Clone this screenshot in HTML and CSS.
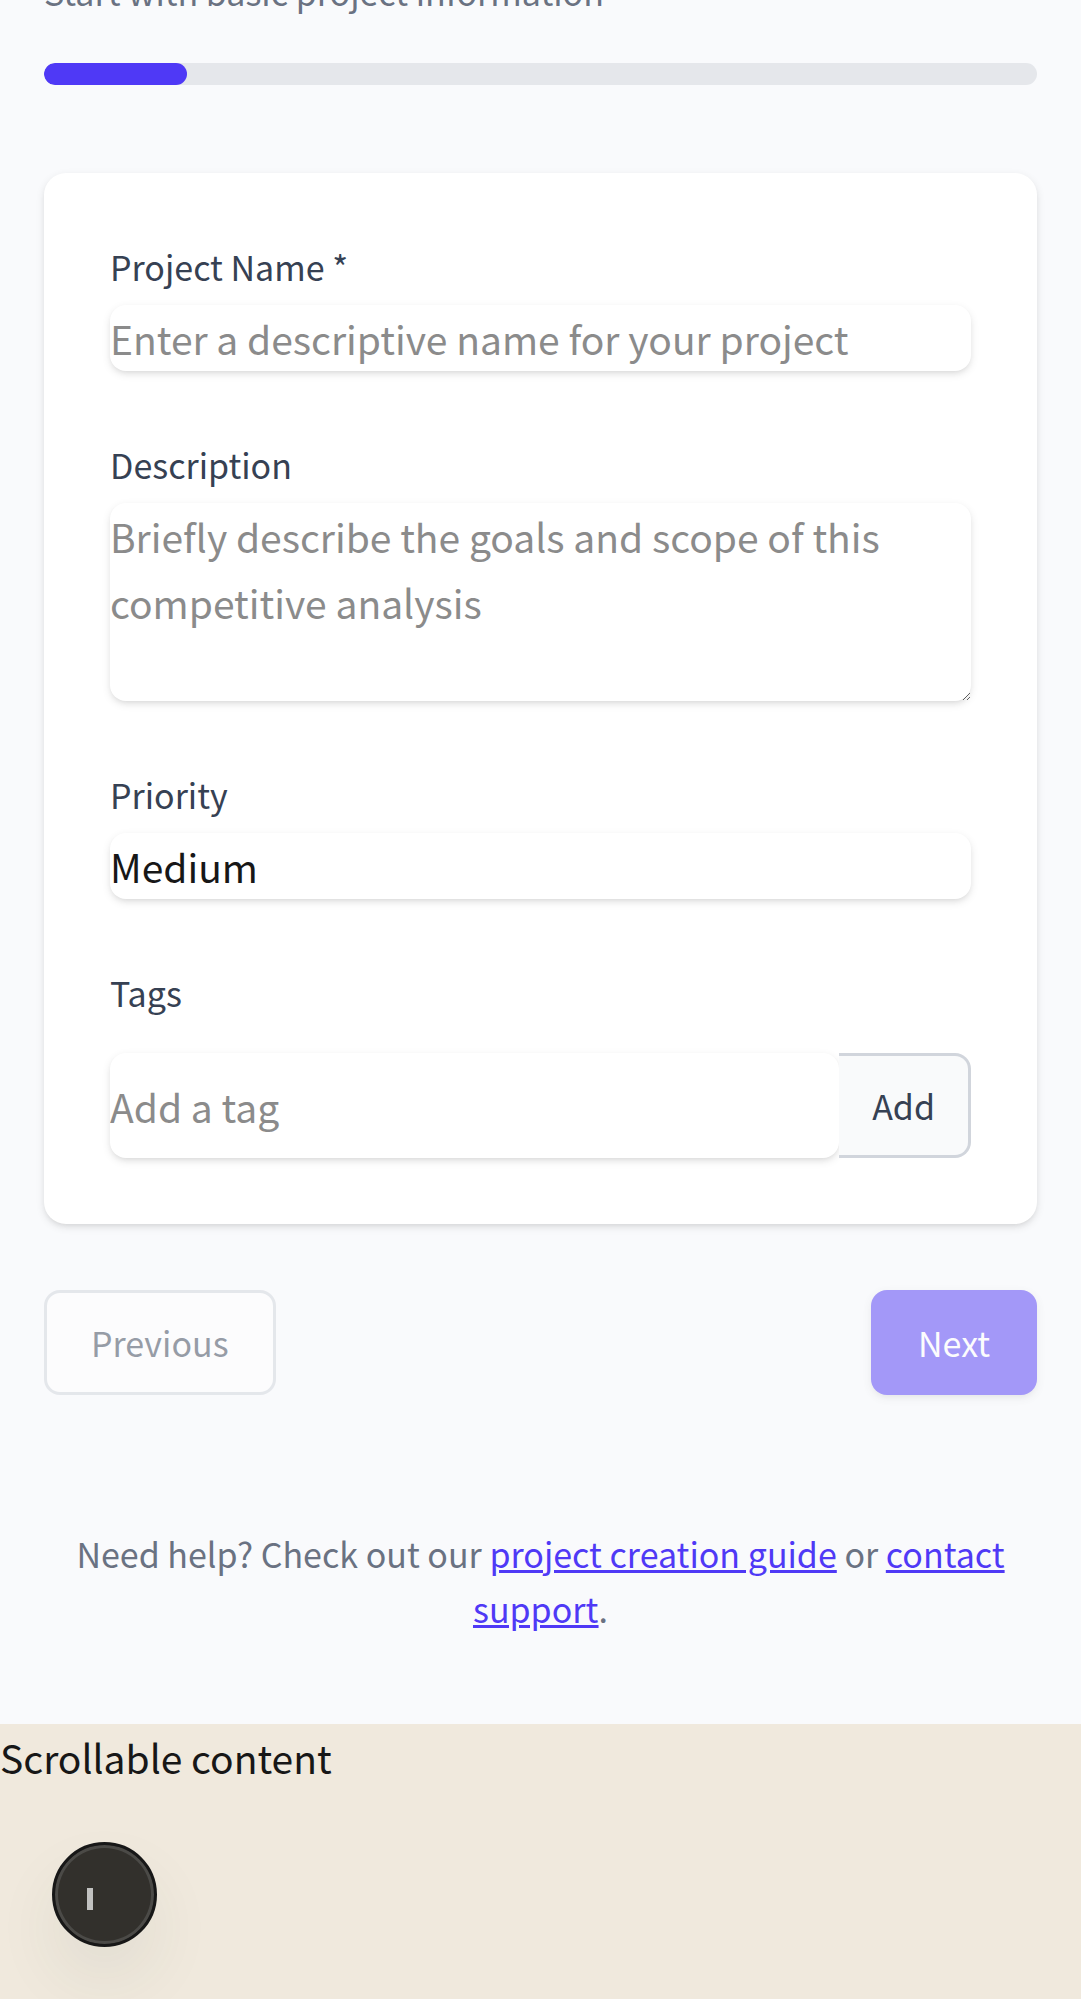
FILE: index.html
```html
<!DOCTYPE html>
<html lang="en">
<head>
<meta charset="utf-8">
<meta name="viewport" content="width=device-width, initial-scale=1">
<title>New project</title>
<link rel="stylesheet" href="styles.css">
</head>
<body>
<main class="wizard">
  <p class="step-hint">Start with basic project information</p>
  <div class="progress"><div class="progress-fill"></div></div>

  <form class="card">
    <div class="field">
      <label class="label" for="name">Project Name *</label>
      <input class="control" id="name" type="text" placeholder="Enter a descriptive name for your project">
    </div>
    <div class="field">
      <label class="label" for="description">Description</label>
      <textarea class="control" id="description" rows="3" placeholder="Briefly describe the goals and scope of this competitive analysis"></textarea>
    </div>
    <div class="field">
      <label class="label" for="priority">Priority</label>
      <select class="control" id="priority">
        <option>Low</option>
        <option selected>Medium</option>
        <option>High</option>
      </select>
    </div>
    <div class="field field-tags">
      <label class="label" for="tag">Tags</label>
      <div class="tag-row">
        <input class="control" id="tag" type="text" placeholder="Add a tag">
        <button class="button button-add" type="button">Add</button>
      </div>
    </div>
  </form>

  <div class="actions">
    <button class="button button-previous" type="button" disabled>Previous</button>
    <button class="button button-next" type="button" disabled>Next</button>
  </div>

  <p class="help">Need help? Check out our <a href="#guide">project creation guide</a> or <a href="#support">contact support</a>.</p>
</main>
<section class="scroll-area">Scrollable content</section>
<button class="fab" type="button" aria-label="Open tools">
  <svg class="fab-icon" viewBox="0 0 6 22" aria-hidden="true"><rect width="6" height="22"/></svg>
</button>
</body>
</html>
```
FILE: styles.css
```css
*, *::before, *::after { box-sizing: border-box; }

:root {
  --shadow: 0 3px 8px rgba(0, 0, 0, .1), 0 3px 6px -3px rgba(0, 0, 0, .1);
}

body {
  margin: 0;
  display: flex;
  flex-direction: column;
  min-height: 100vh;
  overflow-x: hidden;
  background: #f0e9dd;
  color: #171717;
  font-family: "Noto Sans CJK SC", "Noto Sans", sans-serif;
  font-size: 39px;
  line-height: 66px;
}

input, textarea, select, button { font: inherit; color: inherit; }

.wizard {
  margin-top: -36px;
  padding: 0 44px 88px;
  background: #f9fafc;
}

.step-hint {
  margin: 0 0 44px;
  color: #6a7282;
  font-size: 34px;
  line-height: 55px;
}

.progress {
  height: 22px;
  border-radius: 11px;
  background: #e5e7eb;
  overflow: hidden;
}

.progress-fill {
  width: 14.4%;
  height: 100%;
  border-radius: 11px;
  background: #4f39f6;
}

.card {
  display: flex;
  flex-direction: column;
  gap: 66px;
  margin-top: 88px;
  padding: 66px;
  border-radius: 22px;
  background: #fff;
  box-shadow: var(--shadow);
}

.field {
  display: flex;
  flex-direction: column;
  gap: 11px;
}

.field-tags { gap: 33px; }

.label {
  color: #364153;
  font-size: 34px;
  line-height: 55px;
}

.control {
  display: block;
  width: 100%;
  min-width: 0;
  height: 66px;
  margin: 0;
  padding: 0;
  border: 0;
  border-radius: 16px;
  background: #fff;
  box-shadow: var(--shadow);
  appearance: none;
}

.control::placeholder { color: #8b8b8b; opacity: 1; }

textarea.control {
  height: auto;
  resize: vertical;
}

.tag-row { display: flex; }

.tag-row .control {
  flex: 1;
  height: auto;
}

.button {
  padding: 22px 44px;
  border: 3px solid #d1d5dc;
  border-radius: 16px;
  background: #fff;
  color: #364153;
  font-size: 34px;
  line-height: 55px;
}

.button-add {
  padding: 22px 33px;
  border-left: 0;
  border-radius: 0 16px 16px 0;
  background: #f9fafb;
}

.actions {
  display: flex;
  justify-content: space-between;
  margin-top: 66px;
}

.button-previous, .button-next { opacity: .5; }

.button-next {
  border-color: transparent;
  background: #4f39f6 border-box;
  color: #fff;
  box-shadow: var(--shadow);
}

.help {
  margin: 131px 0 0;
  color: #6a7282;
  font-size: 34px;
  line-height: 55px;
  text-align: center;
}

.help a {
  color: #4f39f6;
  text-decoration: underline;
}

.scroll-area { flex: 1; }

.fab {
  position: fixed;
  left: 52px;
  bottom: 52px;
  display: flex;
  align-items: center;
  width: 105px;
  height: 105px;
  padding: 0 0 0 32px;
  border: 3px solid #171717;
  border-radius: 50%;
  background: #32302c;
  box-shadow: inset 0 0 0 3px #4b4a47, 0 33px 66px rgba(40, 70, 50, .07);
}

.fab-icon {
  width: 6px;
  height: 22px;
  margin-top: 8px;
  fill: #c1c1c0;
}
```
